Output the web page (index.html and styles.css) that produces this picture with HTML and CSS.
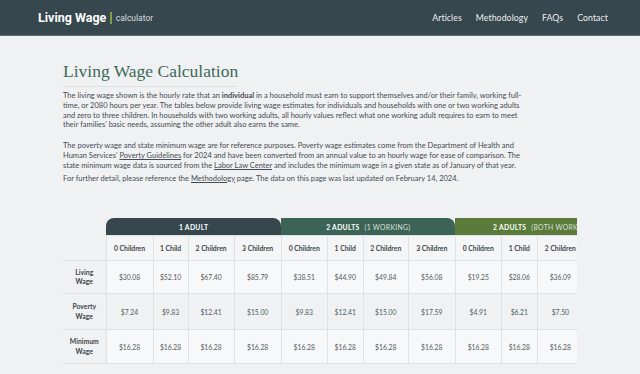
FILE: index.html
```html
<!DOCTYPE html>
<html lang="en">
<head>
  <meta charset="UTF-8">
  <meta name="viewport" content="width=device-width, initial-scale=1.0">
  <title>Living Wage Calculator</title>
  <link rel="stylesheet" href="styles.css">
</head>
<body>
  <header class="topbar">
    <div class="brand">
      <span class="brand-name">Living Wage</span>
      <span class="brand-sep"></span>
      <span class="brand-sub">calculator</span>
    </div>
    <nav class="nav">
      <a href="#">Articles</a>
      <a href="#">Methodology</a>
      <a href="#">FAQs</a>
      <a href="#">Contact</a>
    </nav>
  </header>

  <main class="content">
    <h1 class="title">Living Wage Calculation</h1>
    <p class="intro first">The living wage shown is the hourly rate that an <b>individual</b> in a household must earn to support themselves and/or their family, working full-time, or 2080 hours per year. The tables below provide living wage estimates for individuals and households with one or two working adults and zero to three children. In households with two working adults, all hourly values reflect what one working adult requires to earn to meet their families' basic needs, assuming the other adult also earns the same.</p>
    <p class="intro">The poverty wage and state minimum wage are for reference purposes. Poverty wage estimates come from the Department of Health and Human Services' <a href="#">Poverty Guidelines</a> for 2024 and have been converted from an annual value to an hourly wage for ease of comparison. The state minimum wage data is sourced from the <a href="#">Labor Law Center</a> and includes the minimum wage in a given state as of January of that year.</p>
    <p class="intro">For further detail, please reference the <a href="#">Methodology</a> page. The data on this page was last updated on February 14, 2024.</p>

    <div class="table-wrap">
      <table class="wages">
        <colgroup>
          <col class="c-label">
          <col class="c47"><col class="c35"><col class="c46"><col class="c47">
          <col class="c46"><col class="c36"><col class="c45"><col class="c47">
          <col class="c46"><col class="c36"><col class="c46"><col class="c47">
        </colgroup>
        <thead>
          <tr class="groups">
            <th class="blank"></th>
            <th colspan="4" class="g1">1 ADULT</th>
            <th colspan="4" class="g2">2 ADULTS <span>(1 WORKING)</span></th>
            <th colspan="4" class="g3">2 ADULTS <span>(BOTH WORKING)</span></th>
          </tr>
          <tr class="kids">
            <th class="blank"></th>
            <th>0 Children</th><th>1 Child</th><th>2 Children</th><th>3 Children</th>
            <th>0 Children</th><th>1 Child</th><th>2 Children</th><th>3 Children</th>
            <th>0 Children</th><th>1 Child</th><th>2 Children</th><th>3 Children</th>
          </tr>
        </thead>
        <tbody>
          <tr class="living">
            <th>Living<br>Wage</th>
            <td>$30.08</td><td>$52.10</td><td>$67.40</td><td>$85.79</td>
            <td>$38.51</td><td>$44.90</td><td>$49.84</td><td>$56.08</td>
            <td>$19.25</td><td>$28.06</td><td>$36.09</td><td>$43.17</td>
          </tr>
          <tr class="poverty">
            <th>Poverty<br>Wage</th>
            <td>$7.24</td><td>$9.83</td><td>$12.41</td><td>$15.00</td>
            <td>$9.83</td><td>$12.41</td><td>$15.00</td><td>$17.59</td>
            <td>$4.91</td><td>$6.21</td><td>$7.50</td><td>$8.79</td>
          </tr>
          <tr class="minimum">
            <th>Minimum<br>Wage</th>
            <td>$16.28</td><td>$16.28</td><td>$16.28</td><td>$16.28</td>
            <td>$16.28</td><td>$16.28</td><td>$16.28</td><td>$16.28</td>
            <td>$16.28</td><td>$16.28</td><td>$16.28</td><td>$16.28</td>
          </tr>
        </tbody>
      </table>
    </div>
  </main>
</body>
</html>
```

FILE: styles.css
```css
body {
  margin: 0;
  background-color: #f0f1f3;
  font-family: Lato, "Noto Sans", sans-serif;
  color: #454c52;
}

/* top bar */
.topbar {
  display: flex;
  align-items: center;
  justify-content: space-between;
  height: 35px;
  padding: 0 32px 0 38px;
  background-color: #36474e;
  border-bottom: 1px solid #5b6a70;
}

.brand {
  display: flex;
  align-items: center;
}

.brand-name {
  font-family: Roboto, sans-serif;
  font-weight: 700;
  font-size: 12.5px;
  color: #ffffff;
}

.brand-sep {
  width: 1.5px;
  height: 12px;
  margin: 0 4px 0 4px;
  background-color: #7f9f45;
}

.brand-sub {
  font-family: Roboto, sans-serif;
  font-size: 8.5px;
  color: #d7dcde;
}

.nav {
  display: flex;
  gap: 14px;
}

.nav a {
  font-size: 8.7px;
  letter-spacing: 0.1px;
  color: #eef0f1;
  text-decoration: none;
}

/* main */
.content {
  width: 514px;
  margin: 0 auto;
  padding-top: 25px;
}

.title {
  display: inline-block;
  margin: 0 0 4px 0;
  padding-bottom: 4px;
  font-family: "Liberation Serif", serif;
  font-weight: 400;
  font-size: 17.5px;
  color: #3d6a56;
  border-bottom: 1px solid #dde0e3;
}

.intro {
  max-width: 464px;
  margin: 0 0 3px 0;
  font-size: 7.5px;
  line-height: 9.8px;
}

.intro.first {
  margin-bottom: 11px;
}

.intro a {
  color: #454c52;
}

/* table */
.table-wrap {
  margin-top: 35px;
  overflow: hidden;
}

.wages {
  border-collapse: collapse;
  table-layout: fixed;
  width: 568px;
  font-size: 6.8px;
  text-align: center;
}

.c-label { width: 43px; }
.c35 { width: 35px; }
.c36 { width: 36px; }
.c45 { width: 45px; }
.c46 { width: 46px; }
.c47 { width: 47px; }

.wages th,
.wages td {
  padding: 0;
  border: 1px solid #dfe2e5;
}

.groups th {
  height: 17px;
  border: none;
  color: #ffffff;
  font-weight: 700;
  letter-spacing: 0.3px;
}

.groups th span {
  font-weight: 400;
  margin-left: 3px;
  color: #d9e2dc;
}

.groups .blank {
  background: none;
}

.g1 {
  background-color: #36474e;
  border-radius: 8px 8px 0 0;
}

.g2 {
  background-color: #3c6456;
  border-radius: 0 8px 0 0;
}

.g3 {
  background-color: #5a7b3a;
  border-radius: 0 8px 0 0;
}

.kids th {
  height: 24px;
  font-weight: 700;
  color: #3f464b;
  background-color: #f4f5f6;
}

.kids .blank {
  border: none;
  border-bottom: 1px solid #dfe2e5;
  background: none;
}

.wages tbody th {
  font-weight: 700;
  line-height: 9.5px;
  color: #3f464b;
  border-left: none;
}

.wages tbody td {
  color: #555b60;
}

.living td,
.living th { height: 32px; }

.poverty td,
.poverty th { height: 35px; }

.minimum td,
.minimum th { height: 33px; }

.living td { background-color: #f7f8f9; }
.poverty td { background-color: #eff1f3; }
.minimum td { background-color: #f7f8f9; }
```
